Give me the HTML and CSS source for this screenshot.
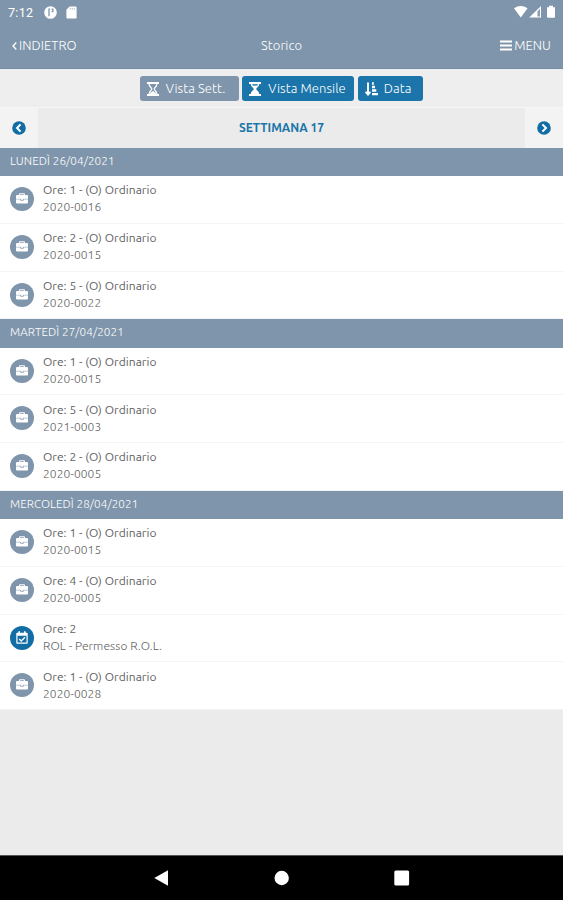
FILE: index.html
```
<!DOCTYPE html>
<html lang="it">
<head>
<meta charset="utf-8">
<title>Storico</title>
<link rel="stylesheet" href="styles.css">
</head>
<body>
<svg class="defs" aria-hidden="true">
  <symbol id="case" viewBox="0 0 12 11"><path fill="#fff" fill-rule="evenodd" d="M3 2V1.2Q3 .2 4 .2H8Q9 .2 9 1.2V2H11Q12 2 12 3V9.6Q12 10.6 11 10.6H1Q0 10.6 0 9.6V3Q0 2 1 2ZM4.2 2H7.8V1.3H4.2Z"/><path d="M0 6.2H4.8M7.2 6.2H12" stroke="#7f95ab" stroke-width=".5"/><path d="M4.6 6.2V7.3H7.4V6.2" fill="none" stroke="#7f95ab" stroke-width=".8"/></symbol>
  <symbol id="cal" viewBox="0 0 12 13"><path fill="#fff" fill-rule="evenodd" d="M2.4 1.8V.3H4V1.8H8V.3H9.6V1.8H11Q11.7 1.8 11.7 2.5V12Q11.7 12.7 11 12.7H1Q.3 12.7.3 12V2.5Q.3 1.8 1 1.8ZM1.5 4.8V11.5H10.5V4.8Z"/><path fill="none" stroke="#fff" stroke-width="1.3" d="M3.2 8 5.2 10 9 6.2"/></symbol>
</svg>
<header class="top">
  <div class="status">
    <span class="clock">7:12</span>
    <svg class="s-app" viewBox="0 0 13 13"><circle cx="6.5" cy="6.5" r="6.3" fill="#fff"/><path d="M5 10.2V3.2H6M7.6 3.2H8.8V5.6H7.6" fill="none" stroke="#7f95ab" stroke-width="1.3"/></svg>
    <svg class="s-sd" viewBox="0 0 11 13"><path d="M3.6.5H9.6Q10.6.5 10.6 1.5V11.5Q10.6 12.5 9.6 12.5H1.4Q.4 12.5.4 11.5V3.8Z" fill="#fff"/><path d="M4.3 2V3.7M6.3 2V3.7M8.3 2V3.7" stroke="#b9c5d1"/></svg>
    <span class="grow"></span>
    <svg class="s-right" viewBox="0 0 44 14"><path d="M1 3.3Q7.5-1.4 14.6 3.3L7.8 12.6Z" fill="#fff"/><path d="M16.2 12.6 28 1V12.6Z" fill="#fff"/><path d="M24.4 6.4 27 3.8V11.6H24.4Z" fill="#8ca0b3"/><path d="M34 2.2H36V.8H40V2.2H42V11.7Q42 12.7 41 12.7H35Q34 12.7 34 11.7Z" fill="#fff"/></svg>
  </div>
  <nav class="bar">
    <span class="back"><svg viewBox="0 0 5 8"><path d="M4.3.6 1.1 4 4.3 7.4" fill="none" stroke="#fff" stroke-width="1.4"/></svg><span>INDIETRO</span></span>
    <span class="title">Storico</span>
    <span class="menu"><svg viewBox="0 0 12 11"><path d="M0 1.5H12M0 5.5H12M0 9.5H12" stroke="#fff" stroke-width="1.8"/></svg><span>MENU</span></span>
  </nav>
</header>
<div class="tools">
  <button class="btn muted"><svg viewBox="0 0 12 14"><path d="M0 1H12M0 13H12" stroke="#fff" stroke-width="1.8"/><path d="M2 1.5C2 5 4.8 5.6 4.8 7S2 9 2 12.5M10 1.5C10 5 7.2 5.6 7.2 7S10 9 10 12.5" fill="none" stroke="#fff" stroke-width="1.2"/><path d="M2.5 12.5Q3 10 6 9Q9 10 9.5 12.5Z" fill="#fff"/></svg><span>Vista Sett.</span></button>
  <button class="btn wide"><svg viewBox="0 0 12 14"><path d="M0 1H12M0 13H12" stroke="#fff" stroke-width="1.8"/><path d="M1.8 1.5H10.2C10.2 5 7.3 5.6 7.3 7S10.2 9 10.2 12.5H1.8C1.8 9 4.7 8.4 4.7 7S1.8 5 1.8 1.5Z" fill="#fff"/><path d="M3.4 2.2H8.6V3.6H3.4Z" fill="#1b75aa"/></svg><span>Vista Mensile</span></button>
  <button class="btn data"><svg viewBox="0 0 13 14"><path d="M3 .5V11M.6 9.8 3 12.6 5.4 9.8" fill="none" stroke="#fff" stroke-width="1.9"/><path d="M7 1.5H8.8M7 5H10M7 8.5H11.3M7 12.2H13" stroke="#fff" stroke-width="2.3"/></svg><span>Data</span></button>
</div>
<div class="week">
  <span class="arrow"><svg viewBox="0 0 14 14"><circle cx="7" cy="7" r="6.8" fill="#126da5"/><path d="M8.6 3.4 5 7 8.6 10.6" fill="none" stroke="#fff" stroke-width="2"/></svg></span>
  <strong>SETTIMANA 17</strong>
  <span class="arrow"><svg viewBox="0 0 14 14"><circle cx="7" cy="7" r="6.8" fill="#126da5"/><path d="M5.4 3.4 9 7 5.4 10.6" fill="none" stroke="#fff" stroke-width="2"/></svg></span>
</div>
<main>
  <section>
    <h2>LUNEDÌ 26/04/2021</h2>
    <article><i><svg><use href="#case"/></svg></i><div><p>Ore: 1 - (O) Ordinario</p><small>2020-0016</small></div></article>
    <article><i><svg><use href="#case"/></svg></i><div><p>Ore: 2 - (O) Ordinario</p><small>2020-0015</small></div></article>
    <article><i><svg><use href="#case"/></svg></i><div><p>Ore: 5 - (O) Ordinario</p><small>2020-0022</small></div></article>
  </section>
  <section>
    <h2>MARTEDÌ 27/04/2021</h2>
    <article><i><svg><use href="#case"/></svg></i><div><p>Ore: 1 - (O) Ordinario</p><small>2020-0015</small></div></article>
    <article><i><svg><use href="#case"/></svg></i><div><p>Ore: 5 - (O) Ordinario</p><small>2021-0003</small></div></article>
    <article><i><svg><use href="#case"/></svg></i><div><p>Ore: 2 - (O) Ordinario</p><small>2020-0005</small></div></article>
  </section>
  <section>
    <h2>MERCOLEDÌ 28/04/2021</h2>
    <article><i><svg><use href="#case"/></svg></i><div><p>Ore: 1 - (O) Ordinario</p><small>2020-0015</small></div></article>
    <article><i><svg><use href="#case"/></svg></i><div><p>Ore: 4 - (O) Ordinario</p><small>2020-0005</small></div></article>
    <article class="leave"><i><svg><use href="#cal"/></svg></i><div><p>Ore: 2</p><small>ROL - Permesso R.O.L.</small></div></article>
    <article><i><svg><use href="#case"/></svg></i><div><p>Ore: 1 - (O) Ordinario</p><small>2020-0028</small></div></article>
  </section>
</main>
<footer>
  <svg viewBox="0 0 16 16"><path d="M.3 8 14 .3V15.7Z" fill="#fff"/></svg>
  <svg viewBox="0 0 16 16"><circle cx="7.7" cy="8" r="7.2" fill="#fff"/></svg>
  <svg viewBox="0 0 16 16"><rect x=".3" y=".6" width="14.8" height="14.8" rx="1.5" fill="#fff"/></svg>
</footer>
</body>
</html>
```
FILE: styles.css
```
* { box-sizing: border-box; }
body {
  margin: 0;
  height: 900px;
  display: flex;
  flex-direction: column;
  overflow: hidden;
  background: #ebebeb;
  font-family: Ubuntu, "Noto Sans", sans-serif;
  font-size: 13px;
  font-weight: 300;
  letter-spacing: .08px;
  color: #606060;
}
svg { display: block; flex: none; }
.defs { position: absolute; width: 0; height: 0; }
.top { height: 69px; background: #7f95ab; color: #fff; border-bottom: 1px solid #748ca5; }
.status { height: 24px; display: flex; align-items: center; padding: 0 6px 0 8px; }
.clock { width: 36px; font: 12.5px/24px Roboto, sans-serif; letter-spacing: .3px; padding-top: 1px; }
.s-app { width: 13px; height: 13px; }
.s-sd { width: 11px; height: 13px; margin-left: 9px; }
.grow { flex: 1; }
.s-right { width: 44px; height: 14px; }
.bar { height: 43px; display: grid; grid-template-columns: 1fr auto 1fr; align-items: center; padding: 0 12px; line-height: 18px; }
.bar span span, .title { padding-bottom: 2px; }
.back, .menu { display: flex; align-items: center; }
.back svg { width: 5px; height: 8px; margin-right: 2px; }
.menu { justify-content: flex-end; }
.menu svg { width: 12px; height: 11px; margin-right: 2px; }
.tools { height: 39px; display: flex; justify-content: center; gap: 3.5px; padding-top: 7px; background: #eee; border-bottom: 1px solid #f5f5f5; }
.btn {
  height: 25px;
  display: flex;
  align-items: center;
  gap: 7px;
  padding: 0 0 0 7px;
  border: 0;
  border-radius: 3px;
  background: #1b75aa;
  color: #fff;
  font: inherit;
  letter-spacing: inherit;
  white-space: nowrap;
}
.btn svg { width: 12px; height: 14px; }
.btn span { padding-bottom: 2px; }
.btn.muted { width: 99px; background: #7f95ab; }
.btn.wide { width: 112px; }
.btn.data { width: 65.5px; }
.btn.data svg { width: 13px; margin-right: -1px; }
.week { height: 40px; display: grid; grid-template-columns: 38px 1fr 38px; align-items: stretch; }
.arrow { display: grid; place-items: center; background: #f3f3f3; }
.arrow svg { width: 14px; height: 14px; }
.week strong { display: grid; place-items: center; padding-bottom: 1px; color: #1b75aa; font-size: 12px; font-weight: 600; letter-spacing: 0; }
h2 { height: 28.2px; margin: 0; padding-left: 10px; background: #7f95ab; color: #fff; font-size: 11.7px; font-weight: 300; line-height: 26.6px; }
article { height: 47.75px; display: flex; padding: 5.2px 0 0 10px; background: #fff; border-bottom: 1px solid #f4f4f4; }
article i { width: 24px; height: 24px; margin: 5.8px 9px 0 0; border-radius: 50%; background: #7f95ab; display: grid; place-items: center; flex: none; }
article i svg { width: 12px; height: 11px; margin-bottom: 1px; }
.leave i { background: #126da5; }
.leave i svg { height: 13px; margin: 0; }
p { margin: 0; font-size: 12px; font-weight: 400; letter-spacing: .05px; line-height: 17px; }
small { display: block; font-size: 12px; line-height: 17px; }
footer { height: 45px; margin-top: auto; display: flex; justify-content: center; align-items: center; gap: 104px; background: #000; border-top: 1px solid #555; }
footer svg { width: 16px; height: 16px; }
```
